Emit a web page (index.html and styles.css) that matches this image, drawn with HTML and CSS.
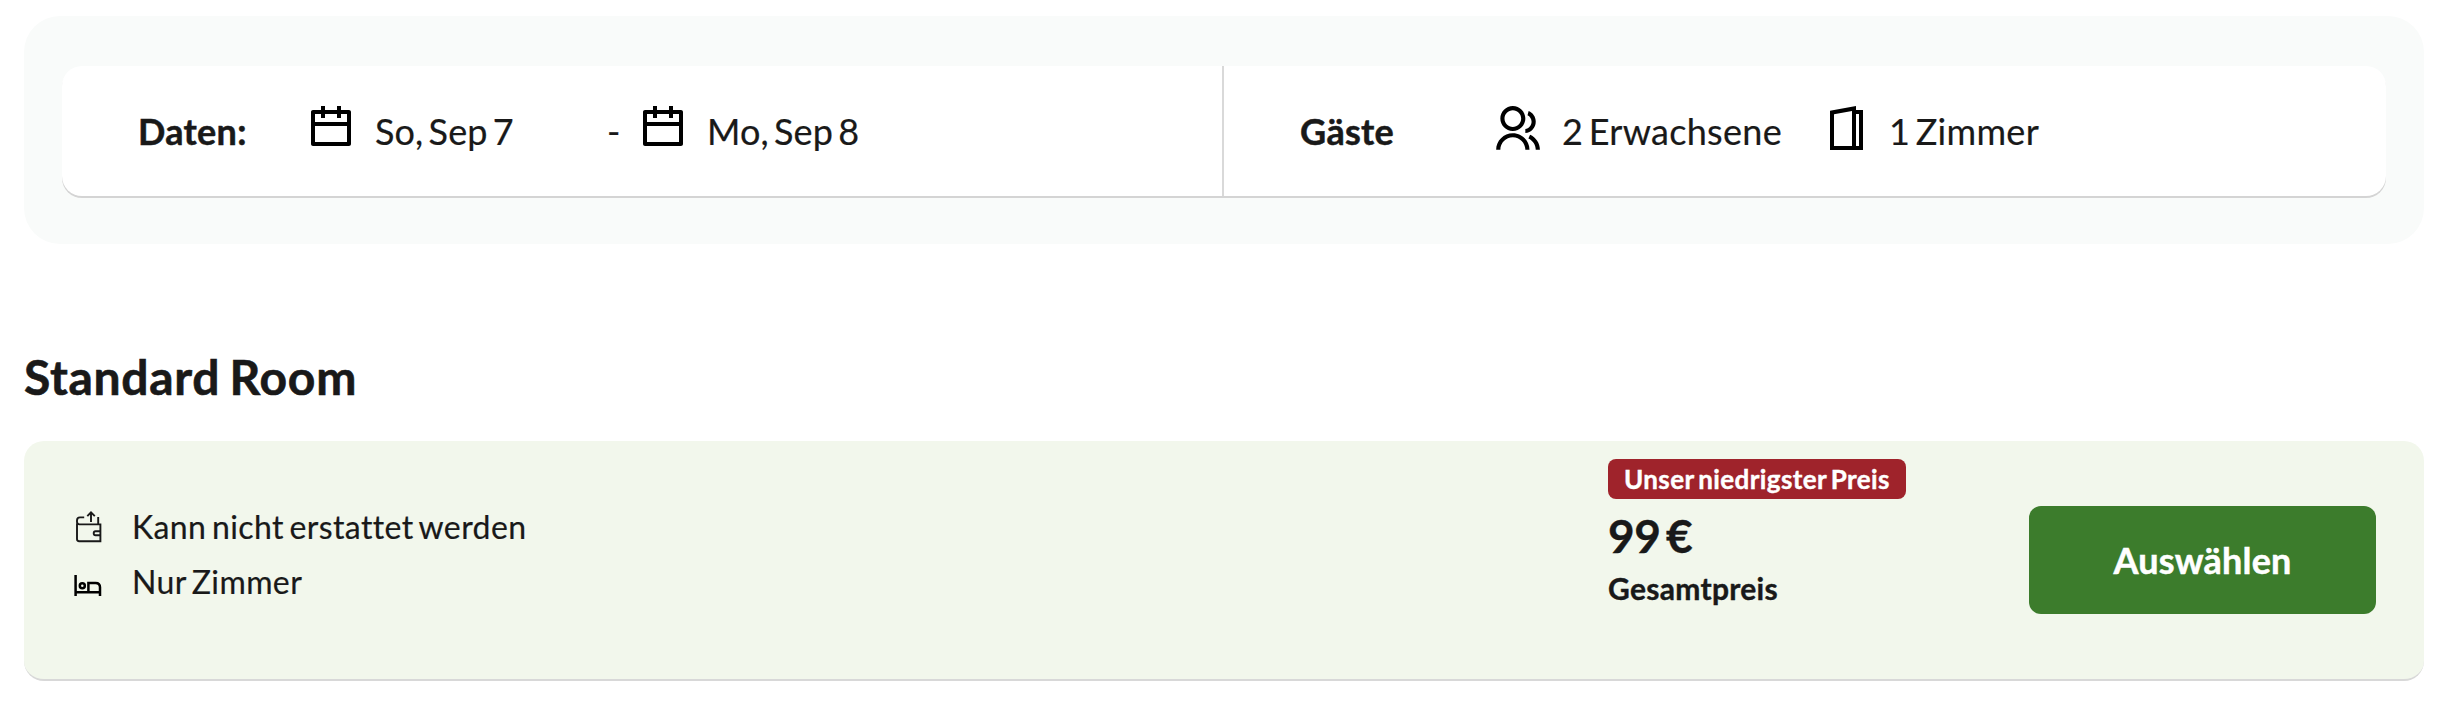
FILE: index.html
```html
<!DOCTYPE html>
<html lang="de">

<head>
    <meta charset="UTF-8" />
    <meta name="viewport" content="width=device-width, initial-scale=1.0" />
    <title>Standard Room</title>
    <link rel="stylesheet" href="styles.css">
</head>

<body>
    <!-- Dates and guests -->
    <div class="search-panel">
        <div class="search-bar">
            <div class="search-field dates">
                <strong>Daten:</strong>
                <span class="value">
                    <svg class="icon-calendar" viewBox="0 0 24 24"><path d="M9 1V3H15V1H17V3H21C21.55 3 22 3.45 22 4V20C22 20.55 21.55 21 21 21H3C2.45 21 2 20.55 2 20V4C2 3.45 2.45 3 3 3H7V1H9ZM20 11H4V19H20V11ZM7 5H4V9H20V5H17V7H15V5H9V7H7V5Z"/></svg>
                    <span class="date">So, Sep 7</span>
                </span>
                <span>-</span>
                <span class="value">
                    <svg class="icon-calendar" viewBox="0 0 24 24"><path d="M9 1V3H15V1H17V3H21C21.55 3 22 3.45 22 4V20C22 20.55 21.55 21 21 21H3C2.45 21 2 20.55 2 20V4C2 3.45 2.45 3 3 3H7V1H9ZM20 11H4V19H20V11ZM7 5H4V9H20V5H17V7H15V5H9V7H7V5Z"/></svg>
                    <span class="date">Mo, Sep 8</span>
                </span>
            </div>
            <div class="search-field guests">
                <strong>Gäste</strong>
                <span class="value">
                    <svg class="icon-guests" viewBox="0 0 24 24"><path d="M2 22C2 17.58 5.58 14 10 14C14.42 14 18 17.58 18 22H16C16 18.69 13.31 16 10 16C6.69 16 4 18.69 4 22H2ZM10 13C6.685 13 4 10.315 4 7C4 3.685 6.685 1 10 1C13.315 1 16 3.685 16 7C16 10.315 13.315 13 10 13ZM10 11C12.21 11 14 9.21 14 7C14 4.79 12.21 3 10 3C7.79 3 6 4.79 6 7C6 9.21 7.79 11 10 11ZM18.284 14.703C21.064 15.956 23 18.752 23 22H21C21 19.564 19.548 17.467 17.463 16.527L18.284 14.703ZM17.596 3.413C19.594 4.237 21 6.204 21 8.5C21 11.37 18.804 13.725 16 13.978V11.965C17.697 11.722 19 10.264 19 8.5C19 7.119 18.202 5.926 17.041 5.356L17.596 3.413Z"/></svg>
                    <span>2 Erwachsene</span>
                </span>
                <span class="value">
                    <svg class="icon-guests" viewBox="0 0 50 50"><path fill-rule="evenodd" d="M11 6.8L37 2V6H44V46H11ZM15 10.2V42H33V7ZM37 10V42H40V10Z"/></svg>
                    <span>1 Zimmer</span>
                </span>
            </div>
        </div>
    </div>

    <h2>Standard Room</h2>

    <!-- Room rate -->
    <div class="rate-card">
        <ul class="features">
            <li>
                <svg viewBox="0 0 32 36"><g fill="none" stroke="#191919" stroke-width="1.9"><path d="M3 14.6V30Q3 32.2 5.2 32.2H26.4V15.4H5.5Q3 15.4 3 12.8V11.5Q3 8.4 6 8.4H10.2"/><path d="M24.2 8V15.4M26.4 22.2H21.5Q19.7 22.2 19.7 24.2T21.5 26.2H26.4"/><path d="M17 13V3.6M13.3 7.2L17 3.4L20.8 7.2"/></g></svg>
                <span>Kann nicht erstattet werden</span>
            </li>
            <li>
                <svg viewBox="0 0 32 36"><g fill="none" stroke="#000" stroke-width="2.5"><path d="M1.6 11V32M1.6 28.2H26M14.4 28V18.9H21.6Q26 18.9 26 23.3V32"/><circle cx="8.3" cy="21.8" r="2.5"/></g></svg>
                <span>Nur Zimmer</span>
            </li>
        </ul>
        <div class="price">
            <span class="badge">Unser niedrigster Preis</span>
            <span class="amount">99 €</span>
            <span class="total">Gesamtpreis</span>
        </div>
        <button type="button" class="select-button">Auswählen</button>
    </div>
</body>

</html>
```
FILE: styles.css
```css
* {
    box-sizing: border-box;
}

body {
    font-family: Lato, sans-serif;
    font-variant-ligatures: none;
    margin: 0;
    padding: 16px 24px 0;
    background: #fff;
    color: #191919;
    -webkit-text-stroke: 0.2px;
}

.search-panel {
    height: 228px;
    padding: 50px 38px;
    border-radius: 36px;
    background: #f9fbfa;
}

.search-bar {
    display: grid;
    grid-template-columns: 1fr 1fr;
    height: 130px;
    border-radius: 20px;
    background: #fff;
    box-shadow: 0 2px 0 #d4d4d4;
    font-size: 36px;
    line-height: 44px;
    word-spacing: -4px;
}

.search-field {
    display: grid;
    align-items: center;
    padding-left: 76px;
    white-space: nowrap;
}

.search-field strong {
    letter-spacing: 0.3px;
    -webkit-text-stroke: 0.5px;
}

.dates {
    grid-template-columns: 169px 300px 32px 1fr;
    border-right: 2px solid #d9d9d9;
}

.guests {
    grid-template-columns: 192px 327px 1fr;
    letter-spacing: 0.3px;
}

.value {
    display: flex;
    align-items: center;
    gap: 20px;
}

.date {
    letter-spacing: 0.1px;
}

.icon-calendar {
    width: 48px;
    height: 48px;
    margin-bottom: 6px;
}

.icon-guests {
    width: 50px;
    height: 50px;
    margin-bottom: 4px;
}

h2 {
    margin: 108px 0 0;
    height: 89px;
    font-size: 48px;
    line-height: 50px;
    letter-spacing: 0.7px;
    word-spacing: -3px;
    -webkit-text-stroke: 0.6px;
}

.rate-card {
    display: flex;
    height: 240px;
    border-bottom: 2px solid #d8d8d8;
    border-radius: 20px;
    background: #f2f7ec;
}

.features {
    flex: 1;
    margin: 0;
    padding: 59px 0 0 50px;
    list-style: none;
    font-size: 32px;
    line-height: 53px;
    letter-spacing: 0.4px;
    word-spacing: -3px;
}

.features li {
    display: flex;
    align-items: flex-start;
    gap: 26px;
    height: 55px;
}

.features svg {
    width: 32px;
    height: 36px;
    margin-top: 9px;
}

.price {
    display: flex;
    flex-direction: column;
    align-items: flex-start;
    width: 421px;
    padding-top: 18px;
    font-weight: bold;
    -webkit-text-stroke: 0.4px;
}

.badge {
    height: 40px;
    padding: 0 16px;
    border-radius: 8px;
    background: #9f232b;
    color: #fff;
    font-size: 26px;
    line-height: 40px;
    letter-spacing: 0.4px;
    word-spacing: -2.5px;
}

.amount {
    margin-top: 9px;
    font-size: 46px;
    line-height: 56px;
    letter-spacing: -0.5px;
    word-spacing: -5px;
}

.total {
    font-size: 30px;
    line-height: 49px;
    letter-spacing: 0.3px;
}

.select-button {
    width: 347px;
    height: 108px;
    margin: 65px 48px 0 0;
    border: none;
    border-radius: 12px;
    background: #3c7c2c;
    color: #fff;
    font: bold 36px Lato, sans-serif;
    letter-spacing: 0.2px;
    -webkit-text-stroke: 0.5px;
    cursor: pointer;
}
```
